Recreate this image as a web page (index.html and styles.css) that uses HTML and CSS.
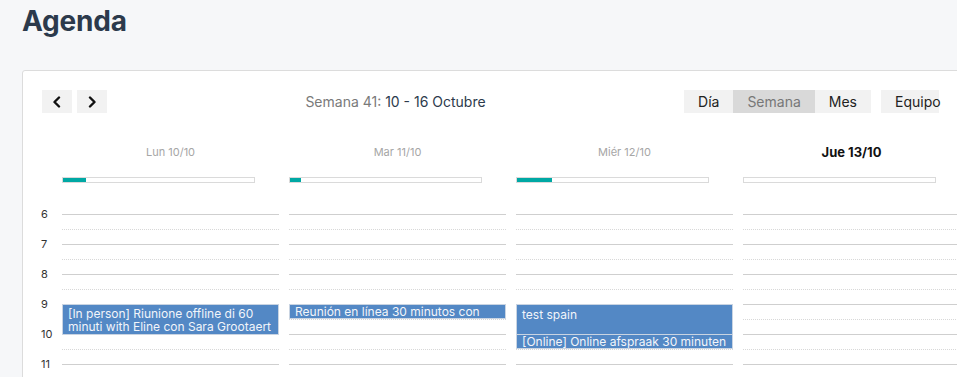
FILE: index.html
```html
<!DOCTYPE html>
<html lang="es">
<head>
<meta charset="utf-8">
<title>Agenda</title>
<link rel="stylesheet" href="styles.css">
</head>
<body>
<h1 class="title">Agenda</h1>
<div class="card">
  <div class="nav">
    <div class="arrows">
      <button class="arrow" aria-label="Anterior"><svg width="10" height="12" viewBox="0 0 10 12"><polyline points="7,1.5 2.5,6 7,10.5" fill="none" stroke="#111" stroke-width="2.4" stroke-linecap="round" stroke-linejoin="round"/></svg></button>
      <button class="arrow" aria-label="Siguiente"><svg width="10" height="12" viewBox="0 0 10 12"><polyline points="3,1.5 7.5,6 3,10.5" fill="none" stroke="#111" stroke-width="2.4" stroke-linecap="round" stroke-linejoin="round"/></svg></button>
    </div>
    <div class="week"><span class="week-label">Semana 41:</span> <span class="week-range">10 - 16 Octubre</span></div>
    <div class="views">
      <div class="seg">
        <button class="view">Día</button>
        <button class="view active">Semana</button>
        <button class="view">Mes</button>
      </div>
      <button class="view team">Equipo</button>
    </div>
  </div>

  <div class="cal">
    <div class="hd-spacer"></div>
    <div class="day-name">Lun 10/10</div>
    <div class="day-name">Mar 11/10</div>
    <div class="day-name">Miér 12/10</div>
    <div class="day-name today">Jue 13/10</div>

    <div class="pg-spacer"></div>
    <div class="progress"><div class="fill" style="width:24px"></div></div>
    <div class="progress"><div class="fill" style="width:12px"></div></div>
    <div class="progress"><div class="fill" style="width:36px"></div></div>
    <div class="progress"><div class="fill" style="width:0px"></div></div>

    <div class="hours">
      <div class="hour"><span>6</span></div>
      <div class="hour"><span>7</span></div>
      <div class="hour"><span>8</span></div>
      <div class="hour"><span>9</span></div>
      <div class="hour"><span>10</span></div>
      <div class="hour"><span>11</span></div>
    </div>

    <div class="col">
      <div class="slot"></div><div class="slot half"></div>
      <div class="slot"></div><div class="slot half"></div>
      <div class="slot"></div><div class="slot half"></div>
      <div class="slot"></div><div class="slot half"></div>
      <div class="slot"></div><div class="slot half"></div>
      <div class="slot"></div><div class="slot half"></div>
      <div class="event ev-9 h60">[In person] Riunione offline di 60 minuti with Eline con Sara Grootaert</div>
    </div>
    <div class="col">
      <div class="slot"></div><div class="slot half"></div>
      <div class="slot"></div><div class="slot half"></div>
      <div class="slot"></div><div class="slot half"></div>
      <div class="slot"></div><div class="slot half"></div>
      <div class="slot"></div><div class="slot half"></div>
      <div class="slot"></div><div class="slot half"></div>
      <div class="event ev-9 h30 single">Reunión en línea 30 minutos con</div>
    </div>
    <div class="col">
      <div class="slot"></div><div class="slot half"></div>
      <div class="slot"></div><div class="slot half"></div>
      <div class="slot"></div><div class="slot half"></div>
      <div class="slot"></div><div class="slot half"></div>
      <div class="slot"></div><div class="slot half"></div>
      <div class="slot"></div><div class="slot half"></div>
      <div class="event ev-9 h60 big">test spain</div>
      <div class="event ev-10 h30 single">[Online] Online afspraak 30 minuten</div>
    </div>
    <div class="col">
      <div class="slot"></div><div class="slot half"></div>
      <div class="slot"></div><div class="slot half"></div>
      <div class="slot"></div><div class="slot half"></div>
      <div class="slot"></div><div class="slot half"></div>
      <div class="slot"></div><div class="slot half"></div>
      <div class="slot"></div><div class="slot half"></div>
    </div>
  </div>
</div>
</body>
</html>
```

FILE: styles.css
```css
* { box-sizing: border-box; }
html, body { margin: 0; padding: 0; }
body {
  background: #f6f7f9;
  font-family: Inter, "Noto Sans", sans-serif;
  color: #333;
  width: 957px;
  height: 377px;
  overflow: hidden;
  padding-left: 22px;
}
.title {
  margin: 0;
  padding-top: 4px;
  height: 70px;
  font-size: 28px;
  line-height: 34px;
  font-weight: 700;
  color: #2c3a4c;
  letter-spacing: -0.2px;
}
.card {
  width: 980px;
  background: #fff;
  border: 1px solid #dcdcdc;
  border-radius: 3px;
  padding: 19px 19px 0 19px;
  height: 320px;
  overflow: hidden;
}
.nav {
  width: 897px;
  display: flex;
  justify-content: space-between;
  align-items: center;
  height: 23px;
}
.arrows { display: flex; gap: 5px; }
.arrow {
  width: 30px;
  height: 23px;
  border: 0;
  padding: 0;
  background: #f2f2f2;
  display: flex;
  align-items: center;
  justify-content: center;
}
.week {
  font-size: 14px;
  white-space: nowrap;
}
.week-label { color: #7a7a7a; }
.week-range { color: #2c3a4c; }
.views { display: flex; gap: 10px; }
.seg { display: flex; }
.view {
  height: 23px;
  border: 0;
  background: #f2f2f2;
  font-family: Inter, "Noto Sans", sans-serif;
  font-size: 14px;
  color: #222;
  padding: 0 14px;
}
.view.active { background: #d9d9d9; color: #777; }
.view.team { padding: 0 0 0 14px; width: 58px; text-align: left; }

.cal {
  display: grid;
  grid-template-columns: 11px repeat(4, 217px);
  column-gap: 10px;
  margin-left: -1px;
}
.day-name {
  margin-top: 29px;
  height: 20px;
  line-height: 20px;
  text-align: center;
  font-size: 11px;
  color: #a6a6a6;
}
.day-name.today { color: #111; font-weight: 700; font-size: 13px; }
.progress {
  margin-top: 15px;
  width: 193px;
  height: 6px;
  border: 1px solid #dadada;
  overflow: hidden;
}
.fill { height: 6px; margin: -1px 0 0 -1px; background: #00a8a4; }
.hours { margin-top: 31px; }
.hour { height: 30px; position: relative; }
.hour span {
  position: absolute;
  left: 0;
  top: -7px;
  font-size: 11px;
  line-height: 14px;
  color: #333;
  white-space: nowrap;
}
.col { margin-top: 31px; position: relative; }
.slot { height: 15px; border-top: 1px solid #cfcfcf; }
.slot.half { border-top: 1px dotted #d8d8d8; }
.event {
  position: absolute;
  left: 0;
  right: 0;
  background: #5388c5;
  border: 1px solid #c9d4e2;
  color: #f2f5fa;
  font-size: 12px;
  line-height: 12.5px;
  padding: 3px 5px 0 5px;
  overflow: hidden;
}
.event.single { white-space: nowrap; padding-top: 0; line-height: 13px; }
.event.big { padding-top: 4px; }
.ev-9 { top: 90px; }
.ev-10 { top: 120px; }
.h60 { height: 31px; }
.h30 { height: 15px; }
```
